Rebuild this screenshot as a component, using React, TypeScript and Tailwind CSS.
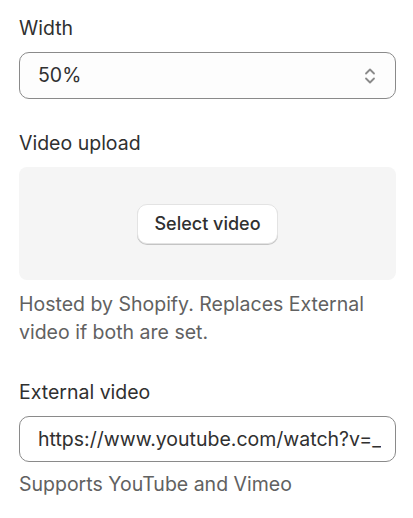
export default function App() {
  return (
    <div
      className="flex w-[413px] flex-col bg-white pl-[19px] pr-[17px] pt-[14px] text-[19.5px] text-[#303030]"
      style={{ fontFamily: "Inter, 'Noto Sans', sans-serif" }}
    >
      {/* Width select */}
      <label className="leading-7">Width</label>
      <div className="mt-[10px] flex h-[47px] items-center justify-between rounded-[10px] border border-[#8a8a8a] bg-[#fdfdfd] pl-[18px] pr-[18px]">
        <span className="text-[#303030]">50%</span>
        <svg width="14" height="20" viewBox="0 0 14 20" fill="none" stroke="#8a8a8a" strokeWidth="1.8" strokeLinecap="round" strokeLinejoin="round">
          <path d="M3 7.5 7 3.5 11 7.5" />
          <path d="M3 12.5 7 16.5 11 12.5" />
        </svg>
      </div>

      {/* Video upload */}
      <label className="mt-[30px] leading-7">Video upload</label>
      <div className="mt-[10px] flex h-[113px] items-center justify-center rounded-[8px] bg-[#f5f5f5]">
        <button className="h-[40px] w-[141px] rounded-[10px] border border-[#e3e3e3] bg-white text-[18px] font-medium text-[#303030] shadow-[0_1px_0_0_#c4c4c4]">
          Select video
        </button>
      </div>
      <p className="mt-[10px] leading-7 text-[#616161]">
        Hosted by Shopify. Replaces External video if both are set.
      </p>

      {/* External video */}
      <label className="mt-[32px] leading-7">External video</label>
      <input
        readOnly
        value="https://www.youtube.com/watch?v=_Xyz123abcD"
        className="mt-[10px] h-[46px] w-full rounded-[10px] border border-[#8a8a8a] bg-white pl-[18px] pr-[14px] text-[#303030] outline-none"
      />
      <p className="mt-[8px] leading-7 text-[#616161]">Supports YouTube and Vimeo</p>
      <div className="h-6" />
    </div>
  );
}
